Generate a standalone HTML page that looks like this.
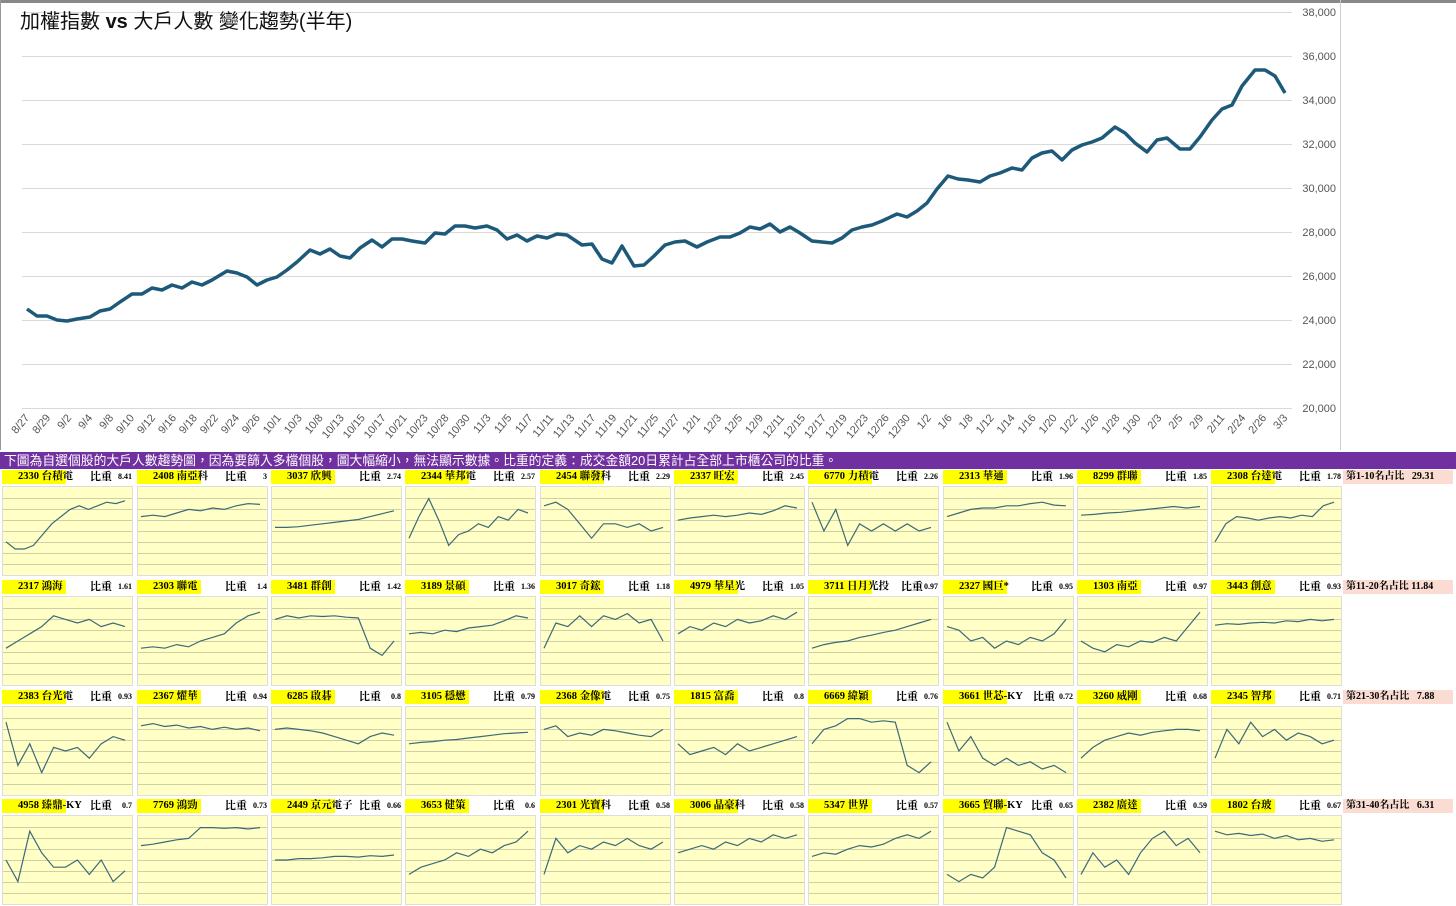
<!DOCTYPE html>
<html><head><meta charset="utf-8">
<style>
*{margin:0;padding:0;box-sizing:border-box}
body{width:1456px;height:886px;overflow:hidden;background:#fff;position:relative;font-family:"Liberation Serif","Noto Serif CJK TC",serif}
#top{position:absolute;left:0;top:0;width:1456px;height:3px;background:#888}
#title{position:absolute;left:20px;top:5px;font:20px "Liberation Sans","Noto Sans CJK TC",sans-serif;color:#111}
#bar{position:absolute;left:0;top:452px;width:1456px;height:17px;background:#7030a0;color:#fff;font:12.8px "Liberation Sans","Noto Sans CJK TC",sans-serif;line-height:17px;padding-left:4px;white-space:nowrap;overflow:hidden}
.c{position:absolute;width:134px;height:107px}
.h{position:absolute;left:0;top:0;width:134px;height:14px;font-weight:bold;font-size:10.5px;line-height:14px;white-space:nowrap}
.y{position:absolute;left:2px;top:0;width:64px;height:14px;background:#ffff00}
.n{position:absolute;left:18px;top:0}
.w{position:absolute;left:90px;top:0;font-size:11px}
.v{position:absolute;right:2px;top:0;font-size:8px}
.p{position:absolute;left:2px;top:16px;width:131px;height:90px;background:#ffffc6;border:1px solid #ddd}
.s{position:absolute;left:1343px;width:110px;height:14px;background:#fadcd2;font-weight:bold;font-size:10px;line-height:14px;padding-left:3px;white-space:nowrap}
</style></head><body>
<div id="top"></div>
<svg width="1456" height="450" style="position:absolute;left:0;top:0">
<g stroke="#d9d9d9" stroke-width="1">
<line x1="22" x2="1292" y1="12.5" y2="12.5"/><line x1="22" x2="1292" y1="56.5" y2="56.5"/><line x1="22" x2="1292" y1="100.5" y2="100.5"/><line x1="22" x2="1292" y1="144.5" y2="144.5"/><line x1="22" x2="1292" y1="188.5" y2="188.5"/><line x1="22" x2="1292" y1="232.5" y2="232.5"/><line x1="22" x2="1292" y1="276.5" y2="276.5"/><line x1="22" x2="1292" y1="320.5" y2="320.5"/><line x1="22" x2="1292" y1="364.5" y2="364.5"/><line x1="22" x2="1292" y1="408.5" y2="408.5"/>
</g>
<line x1="1340.5" y1="0" x2="1340.5" y2="450" stroke="#ccc"/>
<line x1="0.5" y1="0" x2="0.5" y2="450" stroke="#999"/>
<g font-family="Liberation Sans,sans-serif" font-size="11" fill="#555" text-anchor="end">
<text x="1336" y="16">38,000</text><text x="1336" y="60">36,000</text><text x="1336" y="104">34,000</text><text x="1336" y="148">32,000</text><text x="1336" y="192">30,000</text><text x="1336" y="236">28,000</text><text x="1336" y="280">26,000</text><text x="1336" y="324">24,000</text><text x="1336" y="368">22,000</text><text x="1336" y="412">20,000</text>
</g>
<polyline fill="none" stroke="#1d5a7a" stroke-width="3.5" stroke-linejoin="round" points="27,309 37,316 47,316 57,320 67,321 77,319 90,317 100,311 110,309 120,302 132,294 142,294 152,288 162,290 172,285 182,288 192,282 202,285 212,280 227,271 237,273 247,277 257,285 267,280 277,277 287,270 297,262 310,250 320,254 330,249 340,256 350,258 360,248 372,240 382,247 392,239 402,239 412,241 425,243 435,233 445,234 455,226 465,226 475,228 487,226 497,230 507,239 517,235 527,241 537,236 547,238 557,234 567,235 582,245 592,244 602,259 612,263 622,246 634,266 644,265 654,256 665,245 675,242 685,241 697,247 707,242 720,237 730,237 740,233 750,227 760,229 770,224 780,232 790,227 800,233 812,241 822,242 832,243 842,238 852,230 862,227 872,225 882,221 897,214 907,217 917,211 927,203 937,189 948,176 958,179 968,180 980,182 990,176 1000,173 1012,168 1022,170 1032,158 1042,153 1052,151 1062,160 1072,150 1082,145 1092,142 1102,138 1115,127 1125,133 1135,143 1147,152 1157,140 1167,138 1180,149 1190,149 1200,137 1212,120 1222,109 1232,105 1242,86 1255,70 1265,70 1275,76 1285,93"/>
<g id="xl" font-family="Liberation Sans,sans-serif" font-size="11" fill="#555" text-anchor="end"></g>
</svg>
<div id="title">加權指數 <b>vs</b> 大戶人數 變化趨勢(半年)</div>
<div id="bar">下圖為自選個股的大戶人數趨勢圖，因為要篩入多檔個股，圖大幅縮小，無法顯示數據。比重的定義：成交金額20日累計占全部上市櫃公司的比重。</div>
<div class="s" style="top:470px">第1-10名占比&nbsp;&nbsp;&nbsp;29.31</div>
<div class="s" style="top:580px">第11-20名占比 11.84</div>
<div class="s" style="top:690px">第21-30名占比&nbsp;&nbsp;&nbsp;7.88</div>
<div class="s" style="top:799px">第31-40名占比&nbsp;&nbsp;&nbsp;6.31</div>

<div class="c" style="left:0px;top:470px"><div class="h"><div class="y"></div><span class="n">2330 台積電</span><span class="w">比重</span><span class="v">8.41</span></div><div class="p"></div></div>
<div class="c" style="left:135px;top:470px"><div class="h"><div class="y"></div><span class="n">2408 南亞科</span><span class="w">比重</span><span class="v">3</span></div><div class="p"></div></div>
<div class="c" style="left:269px;top:470px"><div class="h"><div class="y"></div><span class="n">3037 欣興</span><span class="w">比重</span><span class="v">2.74</span></div><div class="p"></div></div>
<div class="c" style="left:403px;top:470px"><div class="h"><div class="y"></div><span class="n">2344 華邦電</span><span class="w">比重</span><span class="v">2.57</span></div><div class="p"></div></div>
<div class="c" style="left:538px;top:470px"><div class="h"><div class="y"></div><span class="n">2454 聯發科</span><span class="w">比重</span><span class="v">2.29</span></div><div class="p"></div></div>
<div class="c" style="left:672px;top:470px"><div class="h"><div class="y"></div><span class="n">2337 旺宏</span><span class="w">比重</span><span class="v">2.45</span></div><div class="p"></div></div>
<div class="c" style="left:806px;top:470px"><div class="h"><div class="y"></div><span class="n">6770 力積電</span><span class="w">比重</span><span class="v">2.26</span></div><div class="p"></div></div>
<div class="c" style="left:941px;top:470px"><div class="h"><div class="y"></div><span class="n">2313 華通</span><span class="w">比重</span><span class="v">1.96</span></div><div class="p"></div></div>
<div class="c" style="left:1075px;top:470px"><div class="h"><div class="y"></div><span class="n">8299 群聯</span><span class="w">比重</span><span class="v">1.85</span></div><div class="p"></div></div>
<div class="c" style="left:1209px;top:470px"><div class="h"><div class="y"></div><span class="n">2308 台達電</span><span class="w">比重</span><span class="v">1.78</span></div><div class="p"></div></div>

<div class="c" style="left:0px;top:580px"><div class="h"><div class="y"></div><span class="n">2317 鴻海</span><span class="w">比重</span><span class="v">1.61</span></div><div class="p"></div></div>
<div class="c" style="left:135px;top:580px"><div class="h"><div class="y"></div><span class="n">2303 聯電</span><span class="w">比重</span><span class="v">1.4</span></div><div class="p"></div></div>
<div class="c" style="left:269px;top:580px"><div class="h"><div class="y"></div><span class="n">3481 群創</span><span class="w">比重</span><span class="v">1.42</span></div><div class="p"></div></div>
<div class="c" style="left:403px;top:580px"><div class="h"><div class="y"></div><span class="n">3189 景碩</span><span class="w">比重</span><span class="v">1.36</span></div><div class="p"></div></div>
<div class="c" style="left:538px;top:580px"><div class="h"><div class="y"></div><span class="n">3017 奇鋐</span><span class="w">比重</span><span class="v">1.18</span></div><div class="p"></div></div>
<div class="c" style="left:672px;top:580px"><div class="h"><div class="y"></div><span class="n">4979 華星光</span><span class="w">比重</span><span class="v">1.05</span></div><div class="p"></div></div>
<div class="c" style="left:806px;top:580px"><div class="h"><div class="y"></div><span class="n">3711 日月光投</span><span class="w" style="left:95px">比重</span><span class="v">0.97</span></div><div class="p"></div></div>
<div class="c" style="left:941px;top:580px"><div class="h"><div class="y"></div><span class="n">2327 國巨*</span><span class="w">比重</span><span class="v">0.95</span></div><div class="p"></div></div>
<div class="c" style="left:1075px;top:580px"><div class="h"><div class="y"></div><span class="n">1303 南亞</span><span class="w">比重</span><span class="v">0.97</span></div><div class="p"></div></div>
<div class="c" style="left:1209px;top:580px"><div class="h"><div class="y"></div><span class="n">3443 創意</span><span class="w">比重</span><span class="v">0.93</span></div><div class="p"></div></div>

<div class="c" style="left:0px;top:690px"><div class="h"><div class="y"></div><span class="n">2383 台光電</span><span class="w">比重</span><span class="v">0.93</span></div><div class="p"></div></div>
<div class="c" style="left:135px;top:690px"><div class="h"><div class="y"></div><span class="n">2367 燿華</span><span class="w">比重</span><span class="v">0.94</span></div><div class="p"></div></div>
<div class="c" style="left:269px;top:690px"><div class="h"><div class="y"></div><span class="n">6285 啟碁</span><span class="w">比重</span><span class="v">0.8</span></div><div class="p"></div></div>
<div class="c" style="left:403px;top:690px"><div class="h"><div class="y"></div><span class="n">3105 穩懋</span><span class="w">比重</span><span class="v">0.79</span></div><div class="p"></div></div>
<div class="c" style="left:538px;top:690px"><div class="h"><div class="y"></div><span class="n">2368 金像電</span><span class="w">比重</span><span class="v">0.75</span></div><div class="p"></div></div>
<div class="c" style="left:672px;top:690px"><div class="h"><div class="y"></div><span class="n">1815 富喬</span><span class="w">比重</span><span class="v">0.8</span></div><div class="p"></div></div>
<div class="c" style="left:806px;top:690px"><div class="h"><div class="y"></div><span class="n">6669 緯穎</span><span class="w">比重</span><span class="v">0.76</span></div><div class="p"></div></div>
<div class="c" style="left:941px;top:690px"><div class="h"><div class="y"></div><span class="n">3661 世芯-KY</span><span class="w" style="left:92px">比重</span><span class="v">0.72</span></div><div class="p"></div></div>
<div class="c" style="left:1075px;top:690px"><div class="h"><div class="y"></div><span class="n">3260 威剛</span><span class="w">比重</span><span class="v">0.68</span></div><div class="p"></div></div>
<div class="c" style="left:1209px;top:690px"><div class="h"><div class="y"></div><span class="n">2345 智邦</span><span class="w">比重</span><span class="v">0.71</span></div><div class="p"></div></div>

<div class="c" style="left:0px;top:799px"><div class="h"><div class="y"></div><span class="n">4958 臻鼎-KY</span><span class="w">比重</span><span class="v">0.7</span></div><div class="p"></div></div>
<div class="c" style="left:135px;top:799px"><div class="h"><div class="y"></div><span class="n">7769 鴻勁</span><span class="w">比重</span><span class="v">0.73</span></div><div class="p"></div></div>
<div class="c" style="left:269px;top:799px"><div class="h"><div class="y"></div><span class="n">2449 京元電子</span><span class="w">比重</span><span class="v">0.66</span></div><div class="p"></div></div>
<div class="c" style="left:403px;top:799px"><div class="h"><div class="y"></div><span class="n">3653 健策</span><span class="w">比重</span><span class="v">0.6</span></div><div class="p"></div></div>
<div class="c" style="left:538px;top:799px"><div class="h"><div class="y"></div><span class="n">2301 光寶科</span><span class="w">比重</span><span class="v">0.58</span></div><div class="p"></div></div>
<div class="c" style="left:672px;top:799px"><div class="h"><div class="y"></div><span class="n">3006 晶豪科</span><span class="w">比重</span><span class="v">0.58</span></div><div class="p"></div></div>
<div class="c" style="left:806px;top:799px"><div class="h"><div class="y"></div><span class="n">5347 世界</span><span class="w">比重</span><span class="v">0.57</span></div><div class="p"></div></div>
<div class="c" style="left:941px;top:799px"><div class="h"><div class="y"></div><span class="n">3665 貿聯-KY</span><span class="w">比重</span><span class="v">0.65</span></div><div class="p"></div></div>
<div class="c" style="left:1075px;top:799px"><div class="h"><div class="y"></div><span class="n">2382 廣達</span><span class="w">比重</span><span class="v">0.59</span></div><div class="p"></div></div>
<div class="c" style="left:1209px;top:799px"><div class="h"><div class="y"></div><span class="n">1802 台玻</span><span class="w">比重</span><span class="v">0.67</span></div><div class="p"></div></div>

<script>
var D=[
[.35,.25,.25,.3,.45,.6,.7,.8,.85,.8,.85,.9,.88,.92],
[.7,.72,.7,.75,.8,.78,.82,.8,.85,.88,.87],
[.55,.55,.56,.58,.6,.62,.64,.66,.7,.74,.78],
[.4,.7,.95,.65,.3,.45,.5,.6,.55,.7,.65,.8,.75],
[.85,.9,.8,.6,.4,.6,.6,.55,.6,.5,.55],
[.65,.68,.7,.72,.7,.72,.75,.73,.78,.85,.82],
[.9,.5,.8,.3,.6,.5,.6,.5,.6,.5,.55],
[.7,.75,.8,.82,.82,.85,.85,.88,.9,.86,.85],
[.72,.73,.75,.76,.78,.8,.82,.84,.82,.84],
[.35,.6,.7,.68,.65,.68,.7,.68,.72,.7,.85,.9],
[.4,.5,.6,.7,.85,.8,.75,.8,.7,.75,.7],
[.4,.42,.4,.45,.42,.5,.55,.6,.75,.85,.9],
[.8,.85,.82,.85,.84,.85,.83,.82,.4,.3,.5],
[.6,.62,.6,.65,.63,.68,.7,.72,.78,.85,.82],
[.4,.75,.7,.85,.7,.85,.8,.88,.75,.8,.5],
[.6,.7,.65,.75,.7,.8,.75,.78,.85,.8,.9],
[.4,.45,.48,.5,.55,.58,.62,.65,.7,.75,.8],
[.7,.65,.5,.55,.4,.5,.45,.55,.5,.6,.8],
[.5,.4,.35,.45,.42,.5,.48,.55,.5,.7,.9],
[.72,.74,.73,.75,.76,.75,.78,.77,.8,.78,.8],
[.9,.3,.6,.2,.55,.5,.55,.4,.6,.7,.65],
[.85,.88,.84,.86,.82,.84,.8,.83,.8,.82,.78],
[.8,.82,.8,.78,.75,.7,.65,.6,.7,.75,.72],
[.6,.62,.63,.65,.66,.68,.7,.72,.74,.75,.76],
[.8,.85,.7,.75,.72,.8,.78,.75,.72,.7,.8],
[.6,.45,.5,.55,.45,.6,.5,.55,.6,.65,.7],
[.6,.8,.85,.95,.95,.9,.92,.9,.3,.2,.35],
[.9,.5,.7,.4,.3,.4,.3,.35,.25,.3,.2],
[.4,.55,.65,.7,.75,.72,.76,.78,.8,.8,.78],
[.4,.8,.6,.9,.7,.8,.65,.75,.7,.6,.65],
[.5,.2,.9,.6,.4,.4,.5,.3,.5,.2,.35],
[.7,.72,.75,.78,.8,.95,.95,.94,.95,.93,.95],
[.5,.5,.52,.52,.53,.55,.55,.54,.56,.55,.57],
[.3,.4,.45,.5,.6,.55,.65,.6,.7,.75,.9],
[.3,.8,.6,.7,.65,.75,.7,.8,.7,.65,.75],
[.6,.65,.7,.65,.75,.7,.8,.75,.85,.8,.85],
[.55,.6,.58,.65,.7,.68,.72,.8,.85,.8,.9],
[.3,.2,.3,.25,.4,.95,.9,.85,.6,.5,.25],
[.3,.6,.4,.5,.3,.6,.8,.9,.7,.8,.6],
[.9,.85,.87,.84,.86,.8,.84,.78,.8,.76,.78]];
var ps=document.querySelectorAll('.p');
ps.forEach(function(p,i){var d=D[i],w=129,h=88,s='<svg width="129" height="88" style="position:absolute;left:0;top:0">';
for(var k=1;k<8;k++)s+='<line x1="0" x2="129" y1="'+(k*11+.5)+'" y2="'+(k*11+.5)+'" stroke="#cfcfa8"/>';
var pts=d.map(function(v,j){return (3+j*(w-10)/(d.length-1)).toFixed(1)+','+(h-8-v*(h-16)).toFixed(1)}).join(' ');
s+='<polyline points="'+pts+'" fill="none" stroke="#3a6a7a" stroke-width="1.2"/></svg>';p.innerHTML=s;});
var L="8/27 8/29 9/2 9/4 9/8 9/10 9/12 9/16 9/18 9/22 9/24 9/26 10/1 10/3 10/8 10/13 10/15 10/17 10/21 10/23 10/28 10/30 11/3 11/5 11/7 11/11 11/13 11/17 11/19 11/21 11/25 11/27 12/1 12/3 12/5 12/9 12/11 12/15 12/17 12/19 12/23 12/26 12/30 1/2 1/6 1/8 1/12 1/14 1/16 1/20 1/22 1/26 1/28 1/30 2/3 2/5 2/9 2/11 2/24 2/26 3/3".split(' ');
var g=document.getElementById('xl'),h='';L.forEach(function(t,i){var x=30+i*(1288-30)/(L.length-1);h+='<text transform="translate('+x.toFixed(1)+',418) rotate(-50)">'+t+'</text>';});g.innerHTML=h;
</script>
</body></html>
